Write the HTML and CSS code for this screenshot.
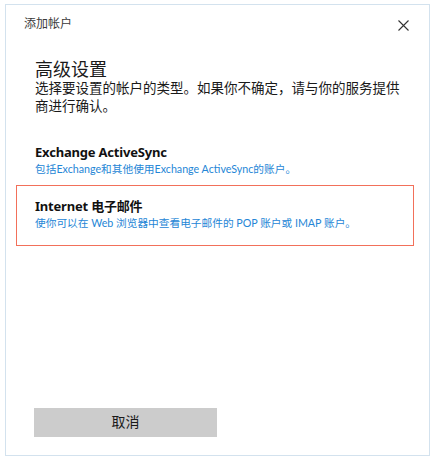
FILE: index.html
```html
<!DOCTYPE html>
<html lang="zh-CN">
<head>
<meta charset="utf-8">
<link rel="stylesheet" href="styles.css">
</head>
<body>
<div class="window">
  <div class="titlebar">
    <span class="title">添加帐户</span>
    <svg class="close" width="11" height="11" viewBox="0 0 11 11"><path d="M0.5 0.5 L10.5 10.5 M10.5 0.5 L0.5 10.5" stroke="#333" stroke-width="1.1" fill="none"/></svg>
  </div>
  <div class="content">
    <h1 class="heading">高级设置</h1>
    <p class="desc">选择要设置的帐户的类型。如果你不确定，请与你的服务提供商进行确认。</p>
    <div class="option first">
      <div class="opt-title">Exchange ActiveSync</div>
      <div class="opt-sub">包括Exchange和其他使用Exchange ActiveSync的账户。</div>
    </div>
  </div>
  <div class="option selected">
    <div class="opt-title">Internet 电子邮件</div>
    <div class="opt-sub">使你可以在 Web 浏览器中查看电子邮件的 POP 账户或 IMAP 账户。</div>
  </div>
  <div class="footer">
    <button class="cancel">取消</button>
  </div>
</div>
</body>
</html>
```
FILE: styles.css
```css
html, body {
  margin: 0;
  padding: 0;
  background: #ffffff;
}
body {
  font-family: "Noto Sans", "Noto Sans CJK SC", sans-serif;
  color: #1f1f1f;
}
.window {
  box-sizing: border-box;
  width: 425px;
  height: 452px;
  margin: 4px 0 0 5px;
  border: 1px solid #d3e2ee;
  display: flex;
  flex-direction: column;
}
.titlebar {
  display: flex;
  align-items: center;
  justify-content: space-between;
  padding: 11px 20px 0 18px;
  height: 16px;
}
.title {
  font-size: 12px;
  line-height: 16px;
  color: #3a3a3a;
}
.close {
  display: block;
  margin-top: 2px;
}
.content {
  padding: 0 24px 0 29px;
}
.heading {
  margin: 27px 0 0 0;
  font-size: 18px;
  line-height: 20px;
  font-weight: normal;
  color: #1a1a1a;
}
.desc {
  margin: 0;
  font-size: 13.5px;
  line-height: 18px;
  color: #1a1a1a;
}
.option.first {
  margin-top: 28px;
}
.opt-title {
  font-size: 13px;
  line-height: 18px;
  font-weight: bold;
  letter-spacing: -0.2px;
  color: #111;
}
.opt-sub {
  font-family: "Lato", "Noto Sans CJK SC", sans-serif;
  font-size: 10.7px;
  line-height: 16px;
  color: #2586d6;
}
.option.selected {
  margin: 8px 15px 0 10px;
  border: 1px solid #f2705a;
  padding: 11px 10px 14px 18px;
}
.footer {
  margin-top: auto;
  padding: 0 0 18px 28px;
}
.cancel {
  display: block;
  width: 183px;
  height: 29px;
  border: none;
  background: #cccccc;
  font-family: "Noto Sans CJK SC", sans-serif;
  font-size: 14px;
  line-height: 27px;
  color: #1a1a1a;
  padding: 0 0 2px 0;
}
```
